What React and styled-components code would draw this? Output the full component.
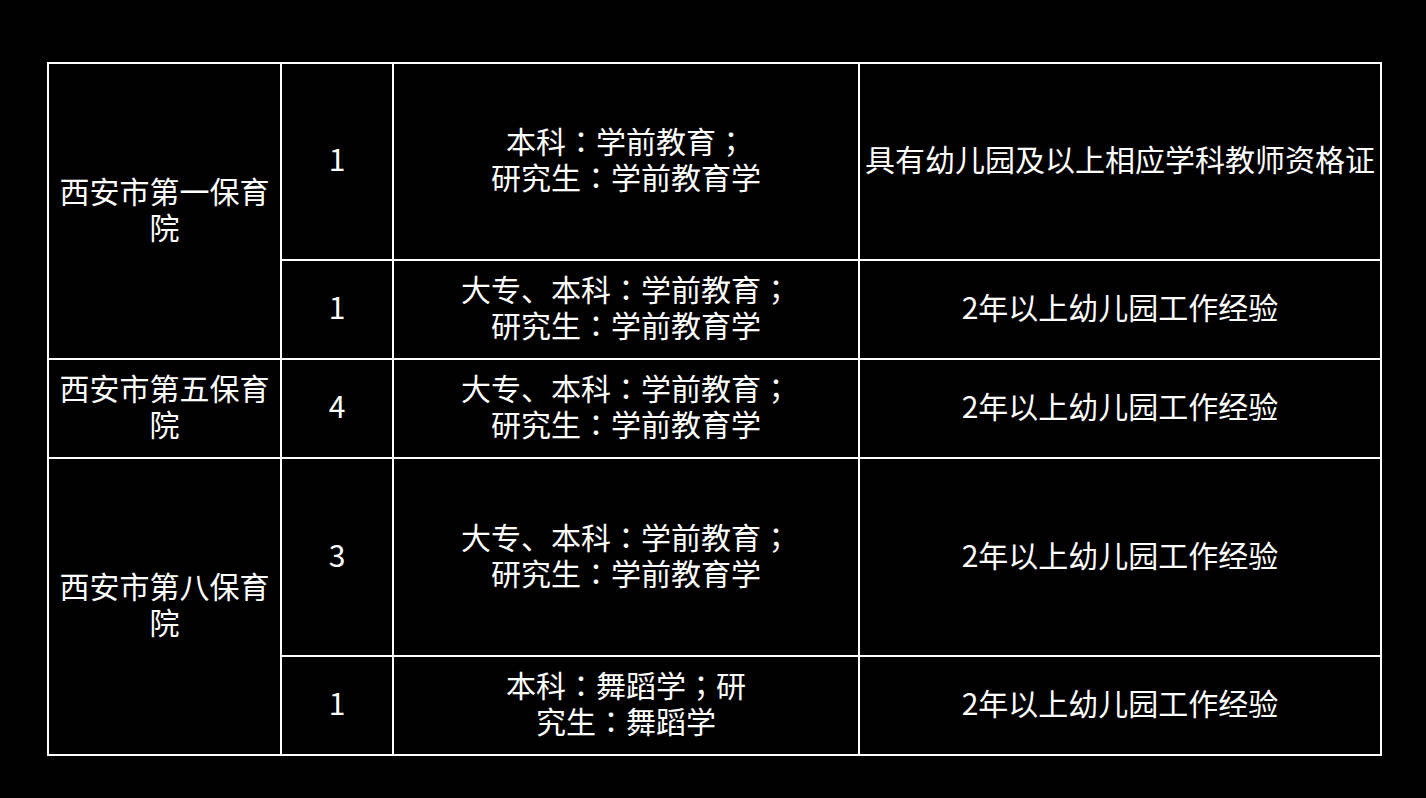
import React from "react";
import styled, { createGlobalStyle } from "styled-components";

const GlobalStyle = createGlobalStyle`
  html, body {
    margin: 0;
    padding: 0;
    background: #000;
  }
  body {
    font-family: "Noto Sans CJK SC", "Microsoft YaHei", sans-serif;
    color: #fff;
  }
`;

const Page = styled.div`
  width: 1426px;
  height: 798px;
  background: #000;
  padding: 62px 0 0 47px;
  box-sizing: border-box;
`;

const Grid = styled.div`
  display: grid;
  grid-template-columns: 231px 110px 464px 520px;
  grid-template-rows: 195px 97px 97px 196px 97px;
  gap: 2px;
  padding: 2px;
  background: #fff;
  width: max-content;
`;

const Cell = styled.div`
  background: #000;
  color: #fff;
  display: flex;
  align-items: center;
  justify-content: center;
  text-align: center;
  box-sizing: border-box;
  padding-bottom: 7px;
  font-family: "Noto Sans CJK SC", sans-serif;
  font-size: 30px;
  line-height: 36px;
  grid-row: ${(p) => p.$row || "auto"};
  grid-column: ${(p) => p.$col || "auto"};
`;

const Punct = styled.span`
  font-family: "Noto Sans CJK JP", "Noto Sans CJK SC", sans-serif;
`;

const C = () => <Punct>：</Punct>;
const S = () => <Punct>；</Punct>;

const rows = [
  {
    school: "西安市第一保育院",
    row: "1 / span 2",
    items: [
      {
        n: "1",
        major: (
          <>
            本科<C />学前教育<S />
            <br />
            研究生<C />学前教育学
          </>
        ),
        req: "具有幼儿园及以上相应学科教师资格证",
      },
      {
        n: "1",
        major: (
          <>
            大专、本科<C />学前教育<S />
            <br />
            研究生<C />学前教育学
          </>
        ),
        req: "2年以上幼儿园工作经验",
      },
    ],
  },
  {
    school: "西安市第五保育院",
    row: "3 / span 1",
    items: [
      {
        n: "4",
        major: (
          <>
            大专、本科<C />学前教育<S />
            <br />
            研究生<C />学前教育学
          </>
        ),
        req: "2年以上幼儿园工作经验",
      },
    ],
  },
  {
    school: "西安市第八保育院",
    row: "4 / span 2",
    items: [
      {
        n: "3",
        major: (
          <>
            大专、本科<C />学前教育<S />
            <br />
            研究生<C />学前教育学
          </>
        ),
        req: "2年以上幼儿园工作经验",
      },
      {
        n: "1",
        major: (
          <>
            本科<C />舞蹈学<S />研
            <br />
            究生<C />舞蹈学
          </>
        ),
        req: "2年以上幼儿园工作经验",
      },
    ],
  },
];

export default function App() {
  let rowIndex = 1;
  const cells = [];
  rows.forEach((g, gi) => {
    cells.push(
      <Cell key={`s${gi}`} $col="1" $row={g.row}>
        {g.school}
      </Cell>
    );
    g.items.forEach((it, ii) => {
      const r = rowIndex++;
      cells.push(
        <Cell key={`n${gi}-${ii}`} $col="2" $row={`${r}`}>
          {it.n}
        </Cell>,
        <Cell key={`m${gi}-${ii}`} $col="3" $row={`${r}`}>
          <div>{it.major}</div>
        </Cell>,
        <Cell key={`r${gi}-${ii}`} $col="4" $row={`${r}`}>
          {it.req}
        </Cell>
      );
    });
  });
  return (
    <>
      <GlobalStyle />
      <Page>
        <Grid>{cells}</Grid>
      </Page>
    </>
  );
}
